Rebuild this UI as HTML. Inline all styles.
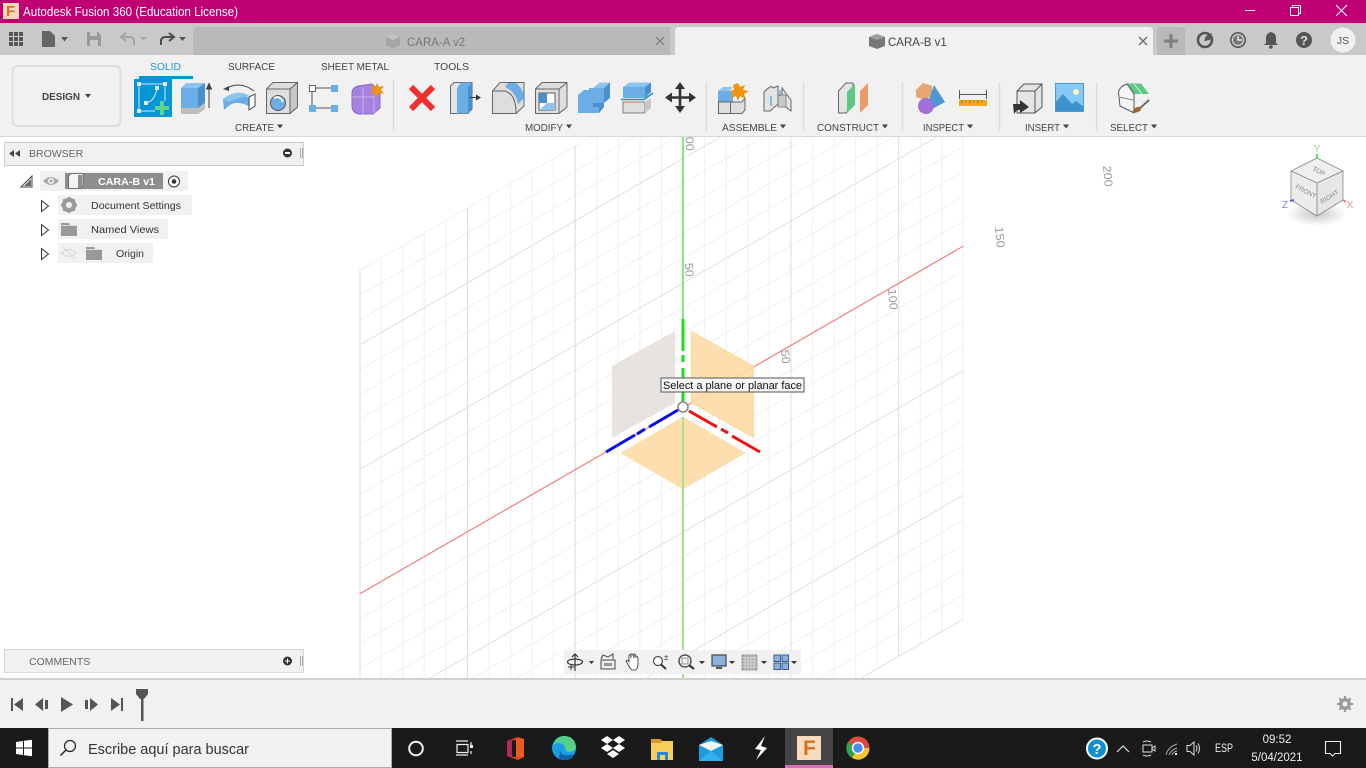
<!DOCTYPE html>
<html><head><meta charset="utf-8"><title>Autodesk Fusion 360</title>
<style>
html,body{margin:0;padding:0;width:1366px;height:768px;overflow:hidden;background:#fff}
svg{display:block;position:absolute;left:0;top:0}
text{font-family:"Liberation Sans",sans-serif}
</style></head><body>
<svg width="1366" height="768" viewBox="0 0 1366 768" xmlns="http://www.w3.org/2000/svg">
<defs>
<clipPath id="vp"><rect x="0" y="137" width="1366" height="541"/></clipPath>
<radialGradient id="sh"><stop offset="0" stop-color="#999" stop-opacity=".55"/><stop offset="1" stop-color="#999" stop-opacity="0"/></radialGradient>
</defs>
<rect width="1366" height="768" fill="#fff"/>

<!-- canvas grid -->
<g fill="none">
<path stroke="#f0f0f0" d="M381.1 258V678M402.6 245.500V678M424.2 233V678M445.8 220.600V678M488.9 195.700V678M510.5 183V678M532.1 170.900V678M553.6 158V678M596.8 137V678M618.3 137V678M639.9 137V678M661.500 137V678M704.6 137V678M726.2 137V678M747.7 137V678M769.3 137V678M812.4 137V678M834 137V678M855.6 137V678M877.1 137V669M920.3 137V644M941.8 137V632M962.9 137V620"/>
<path stroke="#f0f0f0" d="M359.5 270.3L590.9 137M359.5 295.2L634.1 137M359.5 320.1L677.3 137M359.5 369.9L763.7 137M359.5 394.8L806.9 137M359.5 419.7L850.2 137M359.5 444.6L893.4 137M359.5 494.4L963.5 146.4M359.5 519.3L963.5 171.3M359.5 544.2L963.5 196.2M359.5 569.1L963.5 221.1M359.5 618.9L963.5 270.9M359.5 643.8L963.5 295.8M359.5 668.7L963.5 320.7M386.6 678L963.5 345.6M473 678L963.5 395.4M516.2 678L963.5 420.3M559.4 678L963.5 445.2M602.7 678L963.5 470.1M689.1 678L963.5 519.9M732.3 678L963.5 544.8M775.5 678L963.5 569.7M818.7 678L963.5 594.6"/>
<path stroke="#dcdcdc" d="M360 270V678M467.4 208V678M575.2 146V678M790.9 137V678M898.7 137V657"/>
<path stroke="#e0e0e0" d="M359.5 345L720.5 137M359.5 469.5L936.6 137M429.8 678L963.5 370.5M645.9 678L963.5 495M861.1 678L963.5 619"/>
</g>
<g clip-path="url(#vp)">
<path d="M359.5 594L963.5 246" stroke="#f47c7c" stroke-width="1.2" fill="none"/>
<path d="M683 137V320" stroke="#55dd55" stroke-width="1.4"/>
<polygon points="612,366 675,331 675,403 612,438" fill="#e6e2dd" fill-opacity=".95"/>
<polygon points="691,331 754,366 754,438 691,403" fill="#fddcA6" fill-opacity=".9" stroke="#fbd396" stroke-width=".5"/>
<polygon points="621,453 683,417 745,453 683,489" fill="#fddcA6" fill-opacity=".9" stroke="#fbd396" stroke-width=".5"/>
<path d="M683 417V678" stroke="#a8e28e" stroke-width="2"/>
<path d="M683 319V351M683 355V362M683 368V402" stroke="#16e016" stroke-width="3" fill="none"/>
<path d="M678 410L649 427M645 429L637 434M635 435L606 452" stroke="#0a0af0" stroke-width="3" fill="none"/>
<path d="M689 411L717 427M721 429L728 433M732 436L760 452" stroke="#f01010" stroke-width="3" fill="none"/>
<circle cx="683" cy="407" r="5" fill="#fff" stroke="#8a8a8a" stroke-width="1.6"/>
<g fill="#999" font-size="11.5">
<text transform="translate(685,130) rotate(87)" textLength="21" lengthAdjust="spacingAndGlyphs">100</text>
<text transform="translate(685,263) rotate(87)" textLength="14" lengthAdjust="spacingAndGlyphs">50</text>
<text transform="translate(781,350) rotate(85)" textLength="14" lengthAdjust="spacingAndGlyphs">50</text>
<text transform="translate(888,289) rotate(85)" textLength="21" lengthAdjust="spacingAndGlyphs">100</text>
<text transform="translate(995,227) rotate(85)" textLength="21" lengthAdjust="spacingAndGlyphs">150</text>
<text transform="translate(1103,166) rotate(85)" textLength="21" lengthAdjust="spacingAndGlyphs">200</text>
</g>
</g>
<!-- tooltip -->
<rect x="661" y="378" width="143" height="14" fill="#f6f6f6" stroke="#555" stroke-width="1"/>
<text x="663" y="389" font-size="11" fill="#111" textLength="139" lengthAdjust="spacingAndGlyphs">Select a plane or planar face</text>

<!-- viewcube -->
<ellipse cx="1317" cy="214" rx="30" ry="12" fill="url(#sh)"/>
<polygon points="1317,158 1343,171 1317,183 1291,171" fill="#efefef" stroke="#8a8a8a" stroke-width=".8"/>
<polygon points="1291,171 1317,183 1317,216 1291,200" fill="#ececec" stroke="#8a8a8a" stroke-width=".8"/>
<polygon points="1343,171 1317,183 1317,216 1343,200" fill="#e6e6e6" stroke="#8a8a8a" stroke-width=".8"/>
<g fill="#888" font-size="6.5">
<text transform="translate(1312,170) rotate(28)">TOP</text>
<text transform="translate(1295,188) rotate(28)">FRONT</text>
<text transform="translate(1322,204) rotate(-32)">RIGHT</text>
</g>
<path d="M1317 154V159" stroke="#5fe05f" stroke-width="2"/>
<path d="M1290 201L1294 200" stroke="#5a5af0" stroke-width="2"/>
<path d="M1343 200L1346 202" stroke="#f08080" stroke-width="2"/>
<text x="1317" y="152" font-size="10" fill="#7de07d" text-anchor="middle">Y</text>
<text x="1285" y="208" font-size="10" fill="#7a7af5" text-anchor="middle">Z</text>
<text x="1350" y="208" font-size="10" fill="#f08a8a" text-anchor="middle">X</text>

<!-- title bar -->
<rect width="1366" height="23" fill="#bf0073"/>
<rect x="3" y="3" width="16" height="16" fill="#f6d9bd"/>
<text x="6" y="16" font-size="15" font-weight="bold" fill="#d9701f">F</text>
<text x="23" y="16" font-size="12.5" fill="#fff" textLength="215" lengthAdjust="spacingAndGlyphs">Autodesk Fusion 360 (Education License)</text>
<path d="M1245 10.5H1255" stroke="#fff" stroke-width="1"/>
<path d="M1290.5 7.5H1298.5V15.5H1290.5ZM1292.5 7V5.5H1300.5V13.5H1299" fill="none" stroke="#fff" stroke-width="1"/>
<path d="M1336 5L1347 16M1347 5L1336 16" stroke="#fff" stroke-width="1.1"/>

<!-- tab bar -->
<rect y="23" width="1366" height="32" fill="#c9c9c9"/>
<path d="M193 55V31Q193 27 197 27H670V55Z" fill="#b9b9b9"/>
<path d="M675 55V31Q675 27 679 27H1149Q1153 27 1153 31V55Z" fill="#f1f1f1"/>
<path d="M1157 55V31Q1157 27 1161 27H1181Q1185 27 1185 31V55Z" fill="#b9b9b9"/>
<path d="M1171 34V48M1164 41H1178" stroke="#808080" stroke-width="3"/>
<g fill="#555">
<rect x="9" y="32" width="4" height="4"/><rect x="14" y="32" width="4" height="4"/><rect x="19" y="32" width="4" height="4"/>
<rect x="9" y="37" width="4" height="4"/><rect x="14" y="37" width="4" height="4"/><rect x="19" y="37" width="4" height="4"/>
<rect x="9" y="42" width="4" height="4"/><rect x="14" y="42" width="4" height="4"/><rect x="19" y="42" width="4" height="4"/>
</g>
<path d="M42 31H50L55 36V47H42Z" fill="#666"/>
<path d="M61 37H68L64.500 41.500Z" fill="#555"/>
<path d="M87 32H98L101 35V46H87Z" fill="#999"/><rect x="90" y="32" width="7" height="4" fill="#c9c9c9"/><rect x="90" y="40" width="8" height="6" fill="#c9c9c9"/>
<path d="M134 45V41Q134 37 129 37H122M126 33L121 37L126 41" fill="none" stroke="#a5a5a5" stroke-width="2"/>
<path d="M140 37H147L143.500 41Z" fill="#aaa"/>
<path d="M161 45V41Q161 37 166 37H173M169 33L174 37L169 41" fill="none" stroke="#4d4d4d" stroke-width="2"/>
<path d="M179 37H186L182.500 41Z" fill="#555"/>
<path d="M386 37L393 34L400 37V45L393 48L386 45Z" fill="#a5a5a5"/><path d="M386 37L393 40L400 37L393 34Z" fill="#c4c4c4"/>
<text x="407" y="46" font-size="11.500" fill="#777">CARA-A v2</text>
<path d="M656 37L664 45M664 37L656 45" stroke="#777" stroke-width="1.2"/>
<path d="M869 37L877 34L885 37V46L877 49L869 46Z" fill="#777"/><path d="M869 37L877 40L885 37L877 34Z" fill="#a0a0a0"/>
<text x="888" y="46" font-size="11.500" fill="#444">CARA-B v1</text>
<path d="M1139 37L1147 45M1147 37L1139 45" stroke="#666" stroke-width="1.3"/>
<circle cx="1205" cy="40" r="7" fill="none" stroke="#555" stroke-width="2.6"/><path d="M1206 36L1212 33L1210 40L1204 41Z" fill="#555"/>
<circle cx="1238" cy="40" r="7.500" fill="#777" stroke="#555" stroke-width="1"/><circle cx="1238" cy="40" r="5.500" fill="none" stroke="#ddd" stroke-width="1"/><path d="M1238 36V40H1242" stroke="#fff" fill="none" stroke-width="1.2"/>
<path d="M1271 32Q1276 33 1276 38V43L1278 45H1264L1266 43V38Q1266 33 1271 32Z" fill="#555"/><circle cx="1271" cy="47" r="1.800" fill="#555"/>
<circle cx="1304" cy="40" r="8" fill="#555"/><text x="1304" y="45" font-size="13" font-weight="bold" fill="#ddd" text-anchor="middle">?</text>
<circle cx="1343" cy="40" r="12.500" fill="#f1f1f1"/><text x="1343" y="44" font-size="10.500" fill="#555" text-anchor="middle">JS</text>

<!-- toolbar -->
<rect y="55" width="1366" height="81" fill="#f1f1f1"/>
<rect y="136" width="1366" height="1" fill="#d8d8d8"/>
<rect x="12.500" y="66" width="108" height="60" rx="5" fill="#f1f1f1" stroke="#dfdfdf" stroke-width="2"/>
<text x="42" y="100" font-size="10.500" font-weight="bold" fill="#444" textLength="38" lengthAdjust="spacingAndGlyphs">DESIGN</text>
<path d="M85 94H91L88 98Z" fill="#444"/>
<text x="150" y="70" font-size="10.500" fill="#1b97d8" textLength="31" lengthAdjust="spacingAndGlyphs">SOLID</text>
<text x="228" y="70" font-size="10.500" fill="#444" textLength="47" lengthAdjust="spacingAndGlyphs">SURFACE</text>
<text x="321" y="70" font-size="10.500" fill="#444" textLength="68" lengthAdjust="spacingAndGlyphs">SHEET METAL</text>
<text x="434" y="70" font-size="10.500" fill="#444" textLength="35" lengthAdjust="spacingAndGlyphs">TOOLS</text>
<rect x="139" y="76" width="54" height="3" fill="#0696d7"/>
<g font-size="10.500" fill="#444">
<text x="235" y="131" textLength="39" lengthAdjust="spacingAndGlyphs">CREATE</text>
<text x="525" y="131" textLength="38" lengthAdjust="spacingAndGlyphs">MODIFY</text>
<text x="722" y="131" textLength="55" lengthAdjust="spacingAndGlyphs">ASSEMBLE</text>
<text x="817" y="131" textLength="62" lengthAdjust="spacingAndGlyphs">CONSTRUCT</text>
<text x="923" y="131" textLength="41" lengthAdjust="spacingAndGlyphs">INSPECT</text>
<text x="1025" y="131" textLength="35" lengthAdjust="spacingAndGlyphs">INSERT</text>
<text x="1110" y="131" textLength="38" lengthAdjust="spacingAndGlyphs">SELECT</text>
</g>
<path d="M277 124.500H283L280 128.500ZM566 124.500H572L569 128.500ZM780 124.500H786L783 128.500ZM882 124.500H888L885 128.500ZM967 124.500H973L970 128.500ZM1063 124.500H1069L1066 128.500ZM1151 124.500H1157L1154 128.500Z" fill="#444"/>
<path d="M393.500 80V131M706.500 82V131M803.500 82V131M902.500 82V131M999.500 82V131M1096.500 82V131" stroke="#dcdcdc" stroke-width="1.400"/>

<!-- sketch -->
<rect x="134" y="79" width="38" height="38" fill="#0696d7"/>
<path d="M139 84H165V101M139 84V111H155M157 88Q155 101 146 103" fill="none" stroke="#cfeaf7" stroke-width="1"/>
<path d="M137 82h4v4h-4zM163 82h4v4h-4zM137 109h4v4h-4zM155 86h4v4h-4zM144 101h4v4h-4z" fill="#e8e8e8"/>
<path d="M162 101V115M155 108H169" stroke="#5fd58a" stroke-width="4"/>
<!-- extrude -->
<path d="M181 88L186 83H205L198 88Z" fill="#8cc4f0"/><rect x="181" y="88" width="17" height="20" fill="#6aaee5"/><path d="M198 88L205 83V103L198 108Z" fill="#4a90cd"/>
<path d="M181 108H198L205 103V109L198 114H181Z" fill="#bdbdbd"/>
<path d="M209 108V86M206.500 89L209 83.500L211.500 89Z" stroke="#444" fill="#444"/>
<!-- revolve -->
<path d="M225 89Q240 80 254 91" fill="none" stroke="#444" stroke-width="1"/><path d="M223 89L229 86V91Z" fill="#444"/>
<path d="M223 99Q237 88 250 99V107Q238 100 230 105Q226 108 224 110Z" fill="#6aaee5"/>
<path d="M223 99Q237 88 250 96Q238 97 229 102Z" fill="#8cc4f0"/>
<path d="M249 97L255 94V106L249 110Z" fill="#fff" stroke="#444" stroke-width="1"/>
<!-- hole -->
<path d="M266.500 89L273 82.500H297.500V107L290 113.500H266.500Z" fill="#dedede" stroke="#666"/>
<path d="M266.500 89H290V113.500M290 89L297.500 82.500" fill="none" stroke="#666"/>
<path d="M290 89L297.500 82.500V107L290 113.500Z" fill="#c8c8c8" stroke="#666"/>
<circle cx="278" cy="103" r="7.500" fill="#6aaee5" stroke="#555"/>
<path d="M274 98Q280 95 283 102" fill="none" stroke="#fff" stroke-width="2"/>
<!-- form -->
<path d="M315 88H331M312 91V105M315 108H331" stroke="#555"/>
<rect x="309.500" y="85.500" width="6" height="6" fill="#fff" stroke="#666"/>
<rect x="331" y="85" width="7" height="7" fill="#6aaee5"/><rect x="309" y="105" width="7" height="7" fill="#6aaee5"/><rect x="331" y="105" width="7" height="7" fill="#6aaee5"/>
<!-- purple -->
<path d="M352 93Q352 88 358 86L372 84L380 92V108L373 114H358Q352 112 352 106Z" fill="#a582e0" stroke="#8d68cf"/>
<path d="M352 97H374M363 87V114M374 95V113" stroke="#c8b3ee" stroke-width="1" fill="none"/>
<path d="M377 83L379 87L384 86L381 90L384 94L379 93L377 98L375 93L370 94L373 90L370 86L375 87Z" fill="#f0930f"/>

<!-- red x -->
<path d="M411 87L433 109M433 87L411 109" stroke="#f03030" stroke-width="6"/>
<!-- press pull -->
<path d="M450.500 86L454 82.500H472V109L468 113.500H450.500Z" fill="#e4e4e4" stroke="#666"/>
<path d="M457 88L461 82.500H472V108L469 113.500H457Z" fill="#6aaee5"/><path d="M468 87L472 82.500V108L468 113.500Z" fill="#4a90cd"/>
<path d="M470 97.500H478M476 95L480 97.500L476 100" stroke="#333" fill="#333"/>
<!-- fillet -->
<path d="M492.500 91L500 82.500H524V106L516 113.500H492.500Z" fill="#dedede" stroke="#666"/>
<path d="M508 83H516Q524 90 524 98L518 104Q516 92 505 87Z" fill="#6aaee5"/>
<path d="M492.500 91H505Q516 94 516 113" fill="none" stroke="#666"/>
<!-- shell -->
<path d="M535.500 89L542 82.500H567V107L559 113.500H535.500Z" fill="#dedede" stroke="#666"/><path d="M535.500 89H559V113.500M559 89L567 82.500" fill="none" stroke="#666"/>
<rect x="539" y="93" width="16" height="17" fill="#fff" stroke="#555"/><path d="M539 93H547V103H539Z" fill="#4a90cd"/><path d="M547 103H555V110H539Z" fill="#8cc4f0"/>
<!-- combine -->
<path d="M578 95L584 90H593V95H587V113H578Z" fill="#6aaee5"/>
<path d="M578 95H593V107H599V113H578Z" fill="#6aaee5"/>
<path d="M593 88L600 82.500H610L604 88Z" fill="#8cc4f0"/><rect x="589" y="88" width="15" height="15" fill="#6aaee5"/><path d="M604 88L610 82.500V98L604 103Z" fill="#4a90cd"/><path d="M593 103H604V107L599 113V107H593Z" fill="#4a90cd"/>
<!-- split -->
<path d="M623 87L629 82.500H651L645 87Z" fill="#8cc4f0"/><rect x="623" y="87" width="22" height="11" fill="#6aaee5"/><path d="M645 87L651 82.500V92L645 98Z" fill="#4a90cd"/>
<path d="M621 99.500H644L653 93" fill="none" stroke="#1b8fd8" stroke-width="1.400"/>
<path d="M623 102H645V113H623Z" fill="#dedede" stroke="#666" stroke-width=".8"/><path d="M645 102L651 98V108L645 113Z" fill="#c8c8c8"/>
<!-- move -->
<path d="M680 87V109M669 97.500H692" stroke="#333" stroke-width="2.600"/>
<path d="M680 82L685 89H675ZM680 113L685 106H675ZM665 97.500L672 92.500V102.500ZM696 97.500L689 92.500V102.500Z" fill="#333"/>
<!-- assemble -->
<path d="M718 91L723 87H733L729 91Z" fill="#8cc4f0"/><rect x="718" y="91" width="15" height="13" fill="#6aaee5"/>
<path d="M718.500 102H730.500V113.500H718.500ZM730.500 102H742L745 98V110L742 113.500H730.500Z" fill="#dedede" stroke="#666"/>
<path d="M738 83L740 87L745 85L743 90L749 91L744 94L746 99L740 96L738 101L736 96L731 98L733 93L728 91L734 90L733 85Z" fill="#f0930f"/>
<!-- joint -->
<path d="M764 92Q772 84 773 88L778 86V104L770 111H764Z" fill="#e4e4e4" stroke="#666"/>
<path d="M782 88L791 100V111L782 104Z" fill="#e4e4e4" stroke="#666"/>
<rect x="778" y="95" width="8" height="12" fill="#c8c8c8" stroke="#666" stroke-width=".7"/>
<path d="M771 96V106M780 90V96" stroke="#1b8fd8"/>
<!-- construct -->
<path d="M838.500 91L846 83H853V105L846 113H838.500Z" fill="#e4e4e4" stroke="#666"/>
<path d="M847 92L855 84V105L847 113Z" fill="#5ec885"/>
<path d="M860 91L868 83V105L860 113Z" fill="#e89d68"/>
<!-- inspect -->
<path d="M916 90L923 83L932 86V95L925 100L916 97Z" fill="#e8a574"/>
<path d="M934 85L945 102L934 108L927 105Z" fill="#4c97d4"/>
<circle cx="926" cy="106" r="8" fill="#a06fd8"/>
<path d="M959 100H987V106H959Z" fill="#f0a818"/><path d="M959.500 90V99M986.500 90V99M960 94.500H986" stroke="#555" fill="none"/>
<path d="M962 100v3M966 100v2M970 100v3M974 100v2M978 100v3M982 100v2" stroke="#8a5f10" stroke-width=".8"/>
<!-- insert -->
<path d="M1017 91L1024 84H1042V107L1035 113H1017Z" fill="#e4e4e4" stroke="#555"/><path d="M1017 91H1035V113M1035 91L1042 84" fill="none" stroke="#555"/>
<path d="M1013 104L1020 104V100L1029 107L1020 113V110H1017L1014 114Z" fill="#333"/>
<rect x="1055" y="83" width="29" height="29" fill="#86c8f8"/>
<path d="M1055 112V103L1063 94L1072 104L1076 101L1084 107V112Z" fill="#3f93cc"/>
<circle cx="1076" cy="92" r="3" fill="#fbf3c0"/>
<rect x="1055.500" y="83.500" width="28" height="28" fill="none" stroke="#4c97d4"/>
<!-- select -->
<path d="M1127 83.500H1141L1149 94H1134Z" fill="#5ec885"/><path d="M1134 84L1142 94" stroke="#fff" stroke-width=".7"/>
<path d="M1118.500 92Q1120 86 1127 84L1134 94V113L1120 106Z" fill="#f6f6f6" stroke="#555"/>
<path d="M1118.500 97L1133 100" stroke="#888"/>
<path d="M1138 110L1149 100" stroke="#666" stroke-width="2"/>
<path d="M1132 113Q1134 106 1140 107L1141 110Q1138 113 1132 113Z" fill="#a0662d"/>

<!-- browser panel -->
<rect x="4.500" y="142.500" width="299" height="23" fill="#f1f1f1" stroke="#cdcdcd"/>
<path d="M9 153.500L14 150V157ZM15 153.500L20 150V157Z" fill="#444"/>
<text x="29" y="157" font-size="10.500" fill="#666">BROWSER</text>
<circle cx="287.500" cy="153" r="4.500" fill="#333"/><rect x="285" y="152" width="5" height="2" fill="#fff"/>
<path d="M300.500 148V158M302.500 148V158" stroke="#aaa"/>

<path d="M21 187L32 176V187Z" fill="none" stroke="#444"/><path d="M24 186L31 179V186Z" fill="#666"/>
<rect x="40" y="171" width="148" height="20" fill="#f1f1f1"/>
<path d="M43 181Q51 173 59 181Q51 189 43 181Z" fill="#aaa"/><circle cx="51" cy="181" r="3" fill="#f1f1f1"/><circle cx="51" cy="181" r="1.500" fill="#aaa"/>
<rect x="65" y="173" width="98" height="16" fill="#8e8e8e"/>
<path d="M68.500 176L71 173.500H83V186L81 188.500H68.500Z" fill="#f4f4f4" stroke="#555" stroke-width=".8"/>
<path d="M78 175H82V188H78Z" fill="#8e8e8e"/>
<text x="98" y="185" font-size="10.500" font-weight="bold" fill="#fff" textLength="57" lengthAdjust="spacingAndGlyphs">CARA-B v1</text>
<circle cx="174" cy="181.500" r="5.500" fill="#fff" stroke="#333"/><circle cx="174" cy="181.500" r="2.300" fill="#333"/>

<path d="M41.500 200.500L48.500 206L41.500 211.500Z" fill="#fff" stroke="#333"/>
<rect x="58" y="195" width="134" height="20" fill="#f1f1f1"/>
<circle cx="69" cy="205" r="5.500" fill="none" stroke="#999" stroke-width="3.500"/>
<path d="M69 197V213M61 205H77M63.300 199.300L74.700 210.700M74.700 199.300L63.300 210.700" stroke="#999" stroke-width="2.200"/><circle cx="69" cy="205" r="3" fill="#f1f1f1"/>
<text x="91" y="209" font-size="10.500" fill="#333" textLength="90" lengthAdjust="spacingAndGlyphs">Document Settings</text>

<path d="M41.500 224.500L48.500 230L41.500 235.500Z" fill="#fff" stroke="#333"/>
<rect x="58" y="219" width="110" height="20" fill="#f1f1f1"/>
<path d="M61 223H69L70 225H77V236H61Z" fill="#999"/><rect x="61" y="225" width="16" height="1" fill="#ddd"/>
<text x="91" y="233" font-size="10.500" fill="#333" textLength="68" lengthAdjust="spacingAndGlyphs">Named Views</text>

<path d="M41.500 248.500L48.500 254L41.500 259.500Z" fill="#fff" stroke="#333"/>
<rect x="58" y="243" width="95" height="20" fill="#f1f1f1"/>
<path d="M62 253Q69 246 76 253Q69 260 62 253ZM63 247L75 259" stroke="#ddd" stroke-width="1.500" fill="none"/>
<path d="M86 247H94L95 249H102V260H86Z" fill="#999"/><rect x="86" y="249" width="16" height="1" fill="#ddd"/>
<text x="116" y="257" font-size="10.500" fill="#333" textLength="28" lengthAdjust="spacingAndGlyphs">Origin</text>

<!-- comments -->
<rect x="4.500" y="649.500" width="299" height="23" fill="#f1f1f1" stroke="#d8d8d8"/>
<text x="29" y="665" font-size="10.500" fill="#666">COMMENTS</text>
<circle cx="287.500" cy="661" r="4.500" fill="#333"/><path d="M285 661H290M287.500 658.500V663.500" stroke="#fff"/>
<path d="M300.500 656V666M302.500 656V666" stroke="#aaa"/>

<!-- nav bar -->
<rect x="564" y="650" width="237" height="24" fill="#f1f1f1"/>
<path d="M575 654V671M572 657L575 654L578 657" stroke="#333" fill="none" stroke-width="1.200"/>
<ellipse cx="575" cy="662" rx="7.500" ry="3" fill="none" stroke="#333" stroke-width="1.200"/>
<path d="M568 667H574M571 664V670" stroke="#333"/>
<path d="M589 661H594L591.500 664ZM699 661H705L702 664ZM729 661H735L732 664ZM761 661H767L764 664ZM791 661H797L794 664Z" fill="#333"/>
<rect x="601" y="660" width="14" height="9" fill="#eee" stroke="#444"/><rect x="604" y="663" width="8" height="3" fill="#999"/><path d="M601 659L603 655L608 657L613 654V659" stroke="#444" fill="none"/>
<path d="M630 668L626 661Q627 659 629 662V655Q631 654 631 658V654Q633 653 634 658V654Q636 654 636 658V656Q638 656 638 659V664Q638 669 635 670H632Z" fill="#fff" stroke="#333" stroke-width=".8"/>
<circle cx="658" cy="661" r="4.500" fill="#fff" stroke="#555" stroke-width="1.300"/><path d="M661 664.500L666 669" stroke="#333" stroke-width="2"/>
<text x="664" y="660" font-size="8" fill="#333">±</text>
<circle cx="685" cy="661" r="6" fill="#fff" stroke="#555" stroke-width="1.500"/><rect x="682" y="658" width="6" height="6" fill="#f1f1f1" stroke="#777" stroke-width=".8"/><path d="M689.500 665.500L694 669" stroke="#333" stroke-width="2.200"/>
<rect x="712" y="655" width="14" height="11" fill="#8eb1dc" stroke="#444" stroke-width="1.200"/><path d="M716 668H722" stroke="#555" stroke-width="2"/>
<rect x="742" y="655" width="15" height="15" fill="#aaa" stroke="#777" stroke-width=".6"/>
<path d="M745 655V670M748 655V670M751 655V670M754 655V670M742 658H757M742 661H757M742 664H757M742 667H757" stroke="#e4e4e4" stroke-width=".7"/>
<rect x="774" y="655" width="6.500" height="6.500" fill="#8eb1dc" stroke="#3b5c8a"/><rect x="782" y="655" width="6.500" height="6.500" fill="#8eb1dc" stroke="#3b5c8a"/><rect x="774" y="663" width="6.500" height="6.500" fill="#8eb1dc" stroke="#3b5c8a"/><rect x="782" y="663" width="6.500" height="6.500" fill="#8eb1dc" stroke="#3b5c8a"/>

<!-- timeline -->
<rect y="678" width="1366" height="2" fill="#d0d0d0"/>
<rect y="680" width="1366" height="48" fill="#f1f1f1"/>
<g fill="#555">
<rect x="11" y="698" width="2" height="13"/><path d="M23 698V711L14 704.500Z"/>
<path d="M35 704.500L43 698V711Z"/><rect x="45" y="700" width="3" height="9"/>
<path d="M61 697L73 704.500L61 712Z"/>
<rect x="85" y="700" width="3" height="9"/><path d="M90 698L98 704.500L90 711Z"/>
<path d="M111 698L120 704.500L111 711Z"/><rect x="121" y="698" width="2" height="13"/>
<path d="M136 689H148V694L144 699H140L136 694Z"/><rect x="141" y="697" width="2.500" height="24"/>
</g>
<circle cx="1345" cy="704" r="4.500" fill="none" stroke="#999" stroke-width="3"/>
<path d="M1345 696V712M1337 704H1353M1339.300 698.300L1350.700 709.700M1350.700 698.300L1339.300 709.700" stroke="#999" stroke-width="2"/><circle cx="1345" cy="704" r="2.500" fill="#f1f1f1"/>

<!-- taskbar -->
<rect y="728" width="1366" height="40" fill="#1a1a1a"/>
<path d="M16 742L23 741V747.500H16ZM24 740.800L32 739.800V747.500H24ZM16 748.500H23V755L16 754ZM24 748.500H32V756.200L24 755.200Z" fill="#fff"/>
<rect x="48" y="728" width="344" height="40" fill="#adadad"/>
<rect x="49" y="729" width="342" height="38" fill="#f2f2f2"/>
<circle cx="70" cy="746" r="5.500" fill="none" stroke="#222" stroke-width="1.200"/><path d="M66 750L60.500 755.500" stroke="#222" stroke-width="1.400"/>
<text x="88" y="754" font-size="14.500" fill="#333" textLength="161" lengthAdjust="spacingAndGlyphs">Escribe aquí para buscar</text>

<circle cx="416" cy="748.500" r="6.800" fill="none" stroke="#eee" stroke-width="2"/>
<path d="M456 741H468M456 755H468M457 744.500H468V752.500H457ZM471 742V745M471 751V754" fill="none" stroke="#eee" stroke-width="1.200"/><rect x="470" y="745" width="3" height="3" fill="#eee"/>
<path d="M507 741L518 737L524 739V757L518 760L507 756L516 757V740Z" fill="#e8431c"/><path d="M507 741L512 739V757L507 756Z" fill="#b02a55"/><path d="M516 739L524 739V757L516 757Z" fill="#eb5b22"/>
<circle cx="564" cy="748" r="12" fill="#1b9de2"/>
<path d="M553 746Q556 736 564 736Q574 736 576 746Q576 751 570 752Q565 752 565 748Q565 744 558 743Q555 743 553 746Z" fill="#55d08a"/>
<path d="M560 751Q562 757 570 755Q574 754 573 757Q566 763 559 758Z" fill="#105fb0"/>
<path d="M607 736L613 740L607 744L601 740ZM619 736L625 740L619 744L613 740ZM607 744L613 748L607 752L601 748ZM619 744L625 748L619 752L613 748ZM613 750L619 754L613 758L607 754Z" fill="#fff"/>
<path d="M651 739H660L662 741H673V760H651Z" fill="#f6cf5c"/><path d="M651 739H660L662 743H651Z" fill="#d99a2b"/><rect x="657" y="752" width="11" height="8" fill="#2a87d8"/><rect x="660" y="755" width="5" height="5" fill="#f6cf5c"/>
<path d="M711 737L723 745V761H699V745Z" fill="#1b9de2"/><path d="M699 745L711 751L723 745L711 741Z" fill="#f4f4f4"/><path d="M699 761L711 751L723 761Z" fill="#35b0ef"/>
<path d="M765 736L755 749L761 750L756 760L767 748L761 746Z" fill="#fff"/>
<rect x="785" y="728" width="48" height="40" fill="#444"/><rect x="785" y="765" width="48" height="3" fill="#e06bbb"/>
<rect x="797" y="736" width="24" height="24" fill="#f8dcc0"/><text x="803" y="755" font-size="21" font-weight="bold" fill="#d9701f">F</text>
<circle cx="858" cy="748" r="11.500" fill="#dd4b3e"/>
<path d="M858 748L869.500 748A11.500 11.500 0 0 1 852 758Z" fill="#f7c52e"/>
<path d="M858 748L852 758A11.500 11.500 0 0 1 848 742Z" fill="#2da44e"/>
<circle cx="858" cy="748" r="5.500" fill="#4a8df0" stroke="#fff" stroke-width="1.500"/>

<!-- tray -->
<circle cx="1097" cy="748.500" r="10" fill="#0a8fd8" stroke="#fff" stroke-width="2"/>
<text x="1097" y="754" font-size="15" font-weight="bold" fill="#fff" text-anchor="middle">?</text>
<path d="M1117 752L1123 746L1129 752" fill="none" stroke="#ddd" stroke-width="1.200"/>
<path d="M1143 745V752H1152V745ZM1152 748L1155 746V751L1152 749" fill="none" stroke="#ddd"/><path d="M1143 742Q1147 740 1151 742M1143 755Q1147 757 1151 755" fill="none" stroke="#ddd"/>
<path d="M1166 755Q1168 747 1177 744M1169 755Q1171 750 1177 748M1172 755Q1173 752 1177 751" fill="none" stroke="#aaa"/><rect x="1175" y="753" width="2" height="2" fill="#eee"/>
<path d="M1187 745.500H1190L1194 742V755L1190 751.500H1187Z" fill="none" stroke="#ddd"/><path d="M1196 745.500Q1198 748.500 1196 751.500M1198 743.500Q1201 748.500 1198 753.500" fill="none" stroke="#ddd"/>
<text x="1215" y="752" font-size="12" fill="#eee" textLength="18" lengthAdjust="spacingAndGlyphs">ESP</text>
<text x="1277" y="743" font-size="11.500" fill="#eee" text-anchor="middle">09:52</text>
<text x="1277" y="761" font-size="11.500" fill="#eee" text-anchor="middle">5/04/2021</text>
<path d="M1325.500 741.500H1340.500V753.500H1335L1332.500 756L1330 753.500H1325.500Z" fill="none" stroke="#eee" stroke-width="1.100"/>
</svg>
</body></html>
